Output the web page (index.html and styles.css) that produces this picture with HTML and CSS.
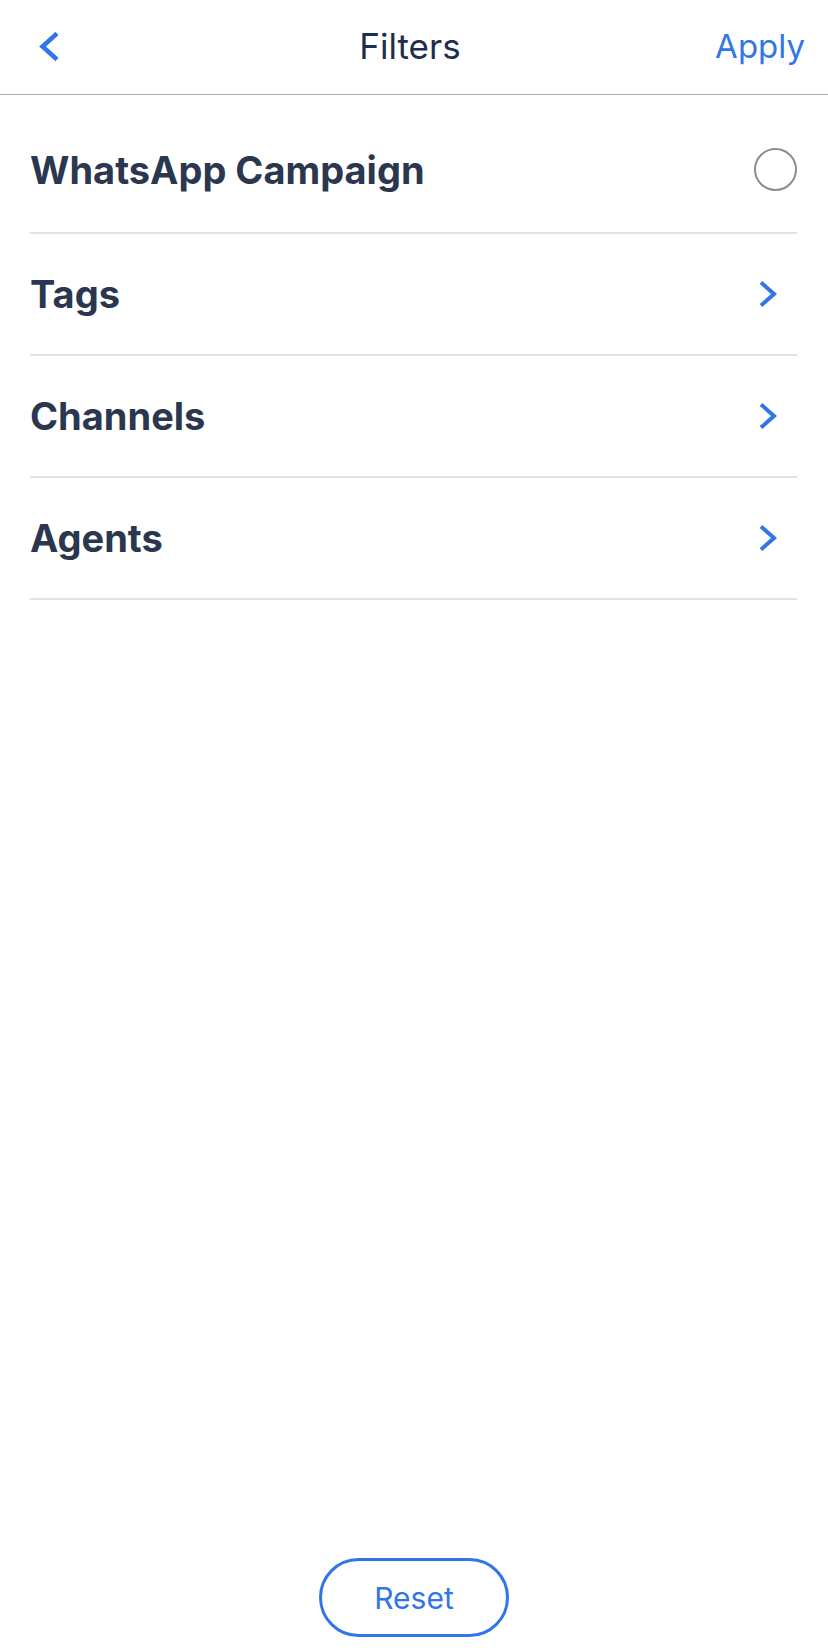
FILE: index.html
```html
<!DOCTYPE html>
<html lang="en">
<head>
    <meta charset="UTF-8">
    <title>Filters</title>
    <link rel="stylesheet" href="styles.css">
</head>
<body>
    <div class="screen">
        <header class="topbar">
            <a class="back" aria-label="Back">
                <svg width="24" height="34" viewBox="0 0 24 34">
                    <path d="M20 4.5 L5.5 17.5 L20 30.5" fill="none" stroke="#3176e8" stroke-width="4.5" stroke-linejoin="miter"/>
                </svg>
            </a>
            <h1 class="title">Filters</h1>
            <a class="apply">Apply</a>
        </header>

        <ul class="filter-list">
            <li class="row row-first">
                <span class="label">WhatsApp Campaign</span>
                <span class="radio"></span>
            </li>
            <li class="row">
                <span class="label">Tags</span>
                <svg class="chevron" width="22" height="30" viewBox="0 0 22 30">
                    <path d="M4 3.5 L17 15 L4 26.5" fill="none" stroke="#3176e8" stroke-width="4"/>
                </svg>
            </li>
            <li class="row">
                <span class="label">Channels</span>
                <svg class="chevron" width="22" height="30" viewBox="0 0 22 30">
                    <path d="M4 3.5 L17 15 L4 26.5" fill="none" stroke="#3176e8" stroke-width="4"/>
                </svg>
            </li>
            <li class="row">
                <span class="label">Agents</span>
                <svg class="chevron" width="22" height="30" viewBox="0 0 22 30">
                    <path d="M4 3.5 L17 15 L4 26.5" fill="none" stroke="#3176e8" stroke-width="4"/>
                </svg>
            </li>
        </ul>

        <footer class="bottom">
            <button class="reset" type="button">Reset</button>
        </footer>
    </div>
</body>
</html>
```

FILE: styles.css
```css
* { box-sizing: border-box; }
body { margin: 0; background: #fff; font-family: Inter, "Noto Sans", sans-serif; }
.screen { min-height: 100vh; display: flex; flex-direction: column; }

.topbar {
    height: 95px; border-bottom: 1px solid #acacac;
    display: grid; grid-template-columns: 1fr auto 1fr; align-items: center;
    padding: 0 23px 2px 23px;
}
.back { display: flex; padding-left: 14px; cursor: pointer; }
.title { margin: 0 8px 0 0; font-size: 35px; font-weight: 400; color: #1f2d4d; }
.apply { justify-self: end; font-size: 33px; color: #3176e8; cursor: pointer; }

.filter-list { list-style: none; margin: 0; padding: 0 31px 0 30px; flex: 1; }
.row {
    height: 122px; display: flex; align-items: center; justify-content: space-between;
    border-bottom: 2px solid #dce3ef;
}
.row-first { height: 139px; padding-top: 12px; }
.label { font-size: 38px; font-weight: 700; color: #2b374f; }
.radio { width: 43px; height: 43px; border: 2px solid #8d8d8d; border-radius: 50%; }
.chevron { margin-right: 18px; }

.bottom { display: flex; justify-content: center; padding-bottom: 15px; }
.reset {
    width: 190px; height: 79px; border: 3px solid #3176e8; border-radius: 40px;
    background: #fff; color: #3176e8; font-family: inherit; font-size: 30px; cursor: pointer;
}
```
